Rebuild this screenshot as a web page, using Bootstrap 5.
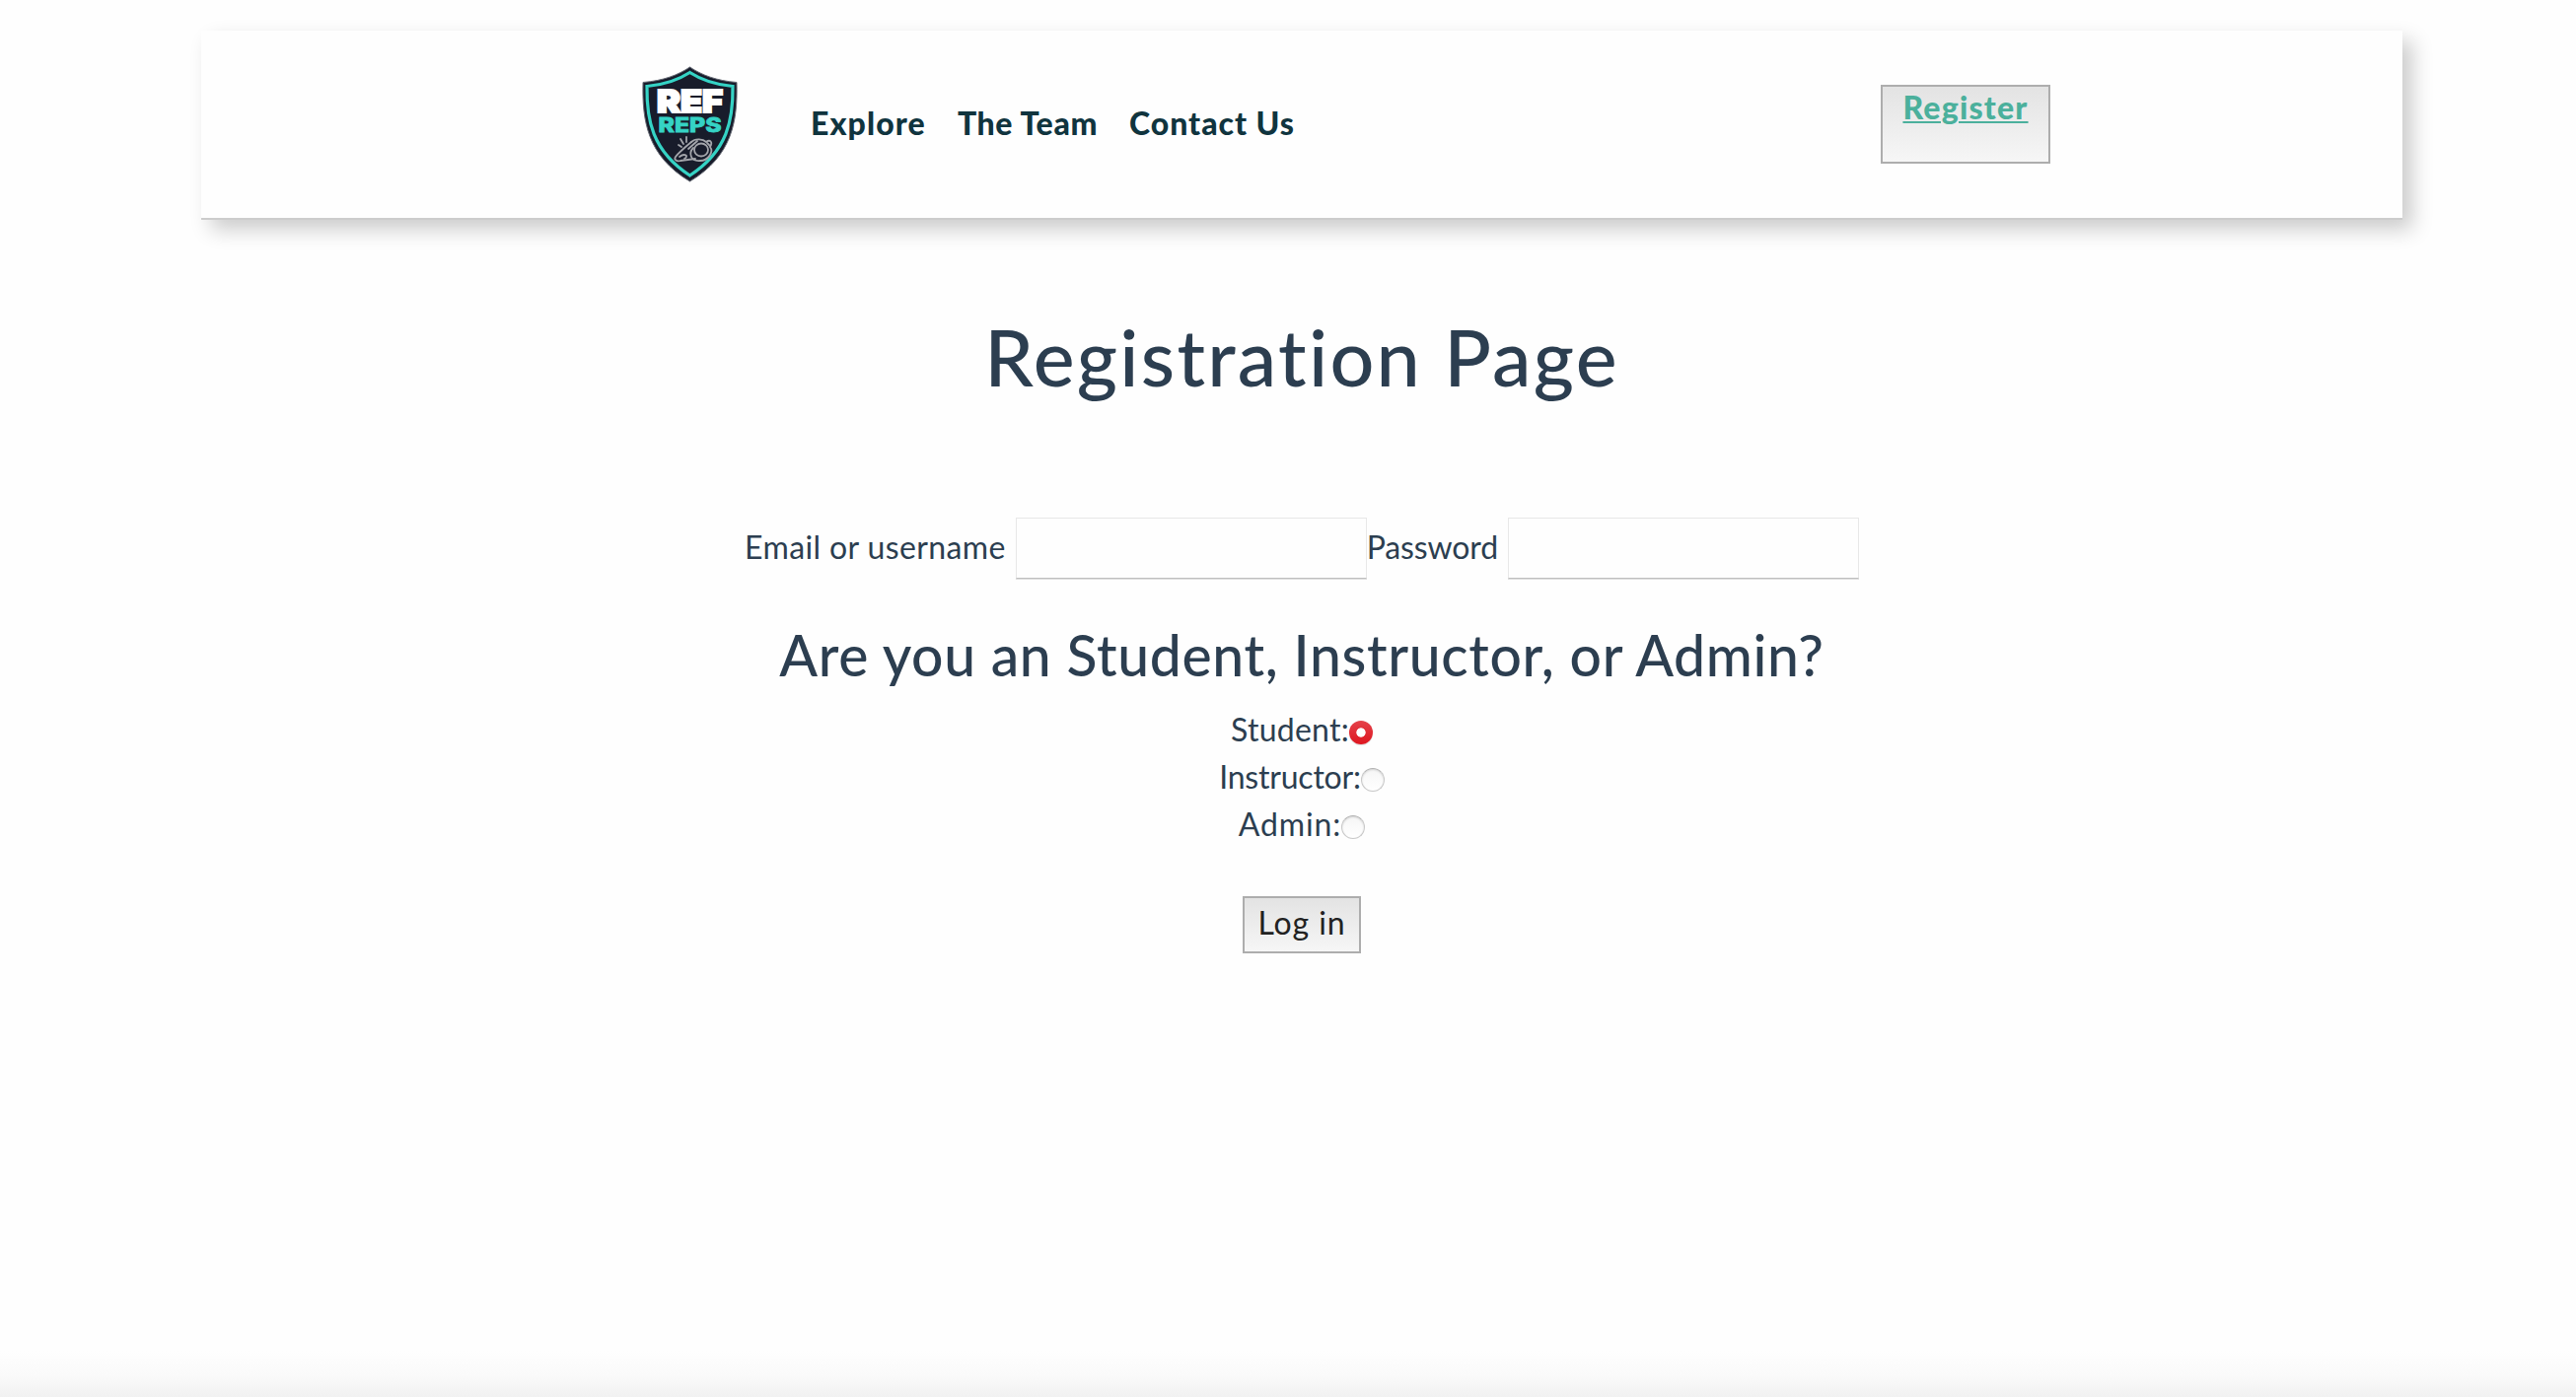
<!DOCTYPE html>
<html lang="en">
<head>
<meta charset="utf-8">
<title>Ref Reps - Registration</title>
<link href="https://cdn.jsdelivr.net/npm/bootstrap@5.3.0/dist/css/bootstrap.min.css" rel="stylesheet">
<style>
body{font-family:Lato,"Open Sans",sans-serif;font-size:32px;line-height:48px;color:#2c3e50;background:#fefefe;min-height:1417px;padding:0;overflow:hidden}
.page-frame{margin:31px 176px 0 204px}
.site-bar{height:192px;padding:0 357px 0 446px;background:#fefefe;border-bottom:2px solid #ccc;box-shadow:10px 10px 20px rgba(0,0,0,.2)}
.shield{width:99px;height:118px;margin-right:73px;flex:none}
.site-links{gap:32px;padding-bottom:2px}
.site-links a{color:#10343e;font-weight:900;text-decoration:none;padding:0}
.grey-box{border:2px solid #adadad;border-radius:0;background:linear-gradient(#e3e3e3,#f6f6f6)}
.register-btn{width:172px;height:80px;font-size:32px;line-height:41px;font-weight:900;letter-spacing:1.2px;color:#4bb09c;text-decoration:underline;text-decoration-thickness:2px;text-underline-offset:2px;padding:0}
.register-btn:hover{color:#4bb09c}
.page-title{font-size:79px;line-height:96px;font-weight:500;letter-spacing:2.26px;margin:91px 0 114px}
.field-row{height:63px}
.field-row label{padding-bottom:1px;white-space:nowrap}
.field-box{width:356px;height:62px;flex:none;border:1px solid #e8e8e8;border-bottom-color:#bfbfbf;border-radius:0;box-shadow:0 1px 0 #dedede;background:#fefefe}
.role-title{font-size:57px;line-height:68px;font-weight:500;letter-spacing:.67px;margin:43px 0 16px}
.role-row{height:48px}
.role-row label{padding-top:4px}
.role-radio.form-check-input{width:24px;height:24px;margin:9px 0 0;flex:none;border:1px solid #c8c8c8;border-top-color:#b0b0b0;background:linear-gradient(#f6f6f6,#fff);box-shadow:inset 0 1px 2px rgba(0,0,0,.15)}
.role-radio.form-check-input:checked{border:0;background:radial-gradient(circle,#fff 0 4.3px,transparent 5px),linear-gradient(#e4424a,#de1620);box-shadow:0 1px 1px rgba(0,0,0,.15)}
.login-btn{width:120px;height:58px;margin-top:51px;font-size:32px;line-height:47px;letter-spacing:.89px;color:#222;padding:0 0 5px}
.bottom-fade{height:47px;background:linear-gradient(#fefefe,#fafafa 55%,#f1f1f1)}
</style>
<script src="https://cdn.jsdelivr.net/npm/bootstrap@5.3.0/dist/js/bootstrap.bundle.min.js"></script>
</head>
<body class="d-flex flex-column">
<div class="page-frame">
  <header class="site-bar d-flex align-items-center">
    <svg class="shield" viewBox="0 0 99 118" role="img" aria-label="Ref Reps">
      <path d="M49.500 1C61 9 77 15 97 16.500C98 55 93 91 49.500 117C6 91 1 55 2 16.500C22 15 38 9 49.500 1Z" fill="#181c2b" stroke="#666b75" stroke-width="1"/>
      <path d="M49.500 6.500C61 14 76 19 93 20.500C93.500 54 88 86 49.500 111C11 86 5.500 54 6 20.500C23 19 38 14 49.500 6.500Z" fill="none" stroke="#35d3c5" stroke-width="3.200"/>
      <text x="16" y="47" font-family="Inter, sans-serif" font-weight="900" font-size="32" textLength="67" lengthAdjust="spacingAndGlyphs" fill="#fff" stroke="#fff" stroke-width="2">REF</text>
      <text x="17.500" y="66.500" font-family="Inter, sans-serif" font-weight="800" font-size="20" textLength="64" lengthAdjust="spacingAndGlyphs" fill="#35d3c5" stroke="#35d3c5" stroke-width=".8">REPS</text>
      <g fill="none" stroke="#a3a5ab" stroke-width="1.800" stroke-linecap="round" stroke-linejoin="round">
        <path d="M51 77C45 82 38 88 35 92C33 95 36 97 40 96L55 94"/>
        <path d="M51 77C55 73 63 74 66 77C70 74 73 77 70 82C74 87 68 96 60 96C50 97 48 88 53 83"/>
        <ellipse cx="61" cy="85" rx="7" ry="6.500"/>
        <path d="M39 92C44 88 49 91 44 94M48 84L57 76M40 74L43 79M46 72L46 77M38 80L41 82M67 78L70 81"/>
      </g>
    </svg>
    <nav class="site-links d-flex">
      <a class="nav-link" href="#" style="letter-spacing:1.11px">Explore</a>
      <a class="nav-link" href="#" style="letter-spacing:.65px">The Team</a>
      <a class="nav-link" href="#" style="letter-spacing:.96px">Contact Us</a>
    </nav>
    <a class="btn grey-box register-btn ms-auto" href="#">Register</a>
  </header>
  <main class="text-center">
    <h1 class="page-title">Registration Page</h1>
    <form>
      <div class="field-row d-flex justify-content-center align-items-center">
        <label for="user" style="letter-spacing:.38px;margin-right:10px">Email or username</label>
        <input id="user" class="form-control field-box" type="text">
        <label for="pass" style="letter-spacing:-.13px;margin-right:10px">Password</label>
        <input id="pass" class="form-control field-box" type="password">
      </div>
      <h2 class="role-title">Are you an Student, Instructor, or Admin?</h2>
      <div class="role-row d-flex justify-content-center align-items-center"><label for="r1" style="letter-spacing:.26px">Student:</label><input id="r1" class="form-check-input role-radio" type="radio" name="role" checked></div>
      <div class="role-row d-flex justify-content-center align-items-center"><label for="r2" style="letter-spacing:-.2px">Instructor:</label><input id="r2" class="form-check-input role-radio" type="radio" name="role"></div>
      <div class="role-row d-flex justify-content-center align-items-center"><label for="r3" style="letter-spacing:.88px">Admin:</label><input id="r3" class="form-check-input role-radio" type="radio" name="role"></div>
      <button class="btn grey-box login-btn" type="button">Log in</button>
    </form>
  </main>
</div>
<div class="bottom-fade mt-auto"></div>
</body>
</html>
